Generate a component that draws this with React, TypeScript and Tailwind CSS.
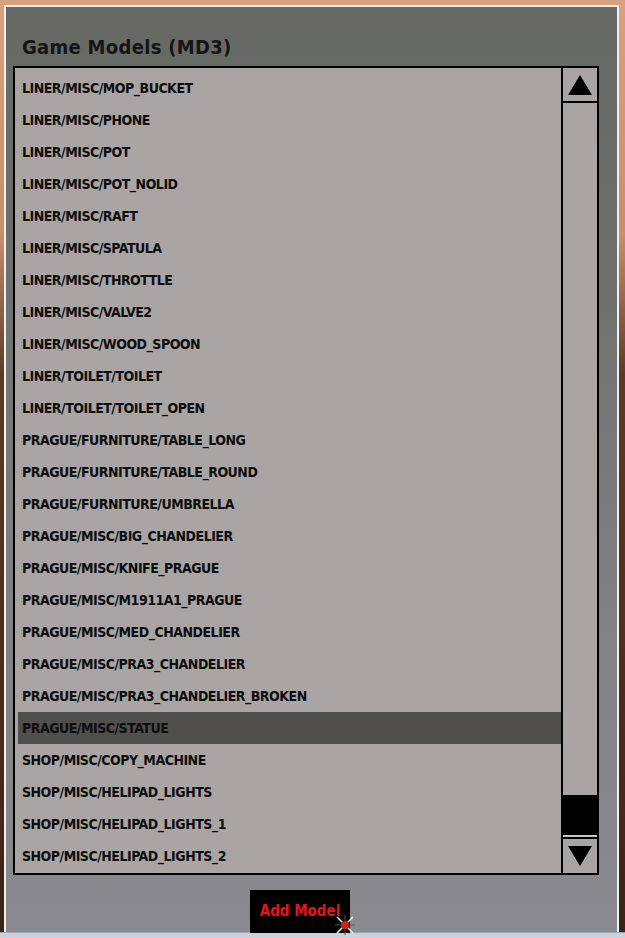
import React from "react";

const rows = [
  "LINER/MISC/MOP_BUCKET",
  "LINER/MISC/PHONE",
  "LINER/MISC/POT",
  "LINER/MISC/POT_NOLID",
  "LINER/MISC/RAFT",
  "LINER/MISC/SPATULA",
  "LINER/MISC/THROTTLE",
  "LINER/MISC/VALVE2",
  "LINER/MISC/WOOD_SPOON",
  "LINER/TOILET/TOILET",
  "LINER/TOILET/TOILET_OPEN",
  "PRAGUE/FURNITURE/TABLE_LONG",
  "PRAGUE/FURNITURE/TABLE_ROUND",
  "PRAGUE/FURNITURE/UMBRELLA",
  "PRAGUE/MISC/BIG_CHANDELIER",
  "PRAGUE/MISC/KNIFE_PRAGUE",
  "PRAGUE/MISC/M1911A1_PRAGUE",
  "PRAGUE/MISC/MED_CHANDELIER",
  "PRAGUE/MISC/PRA3_CHANDELIER",
  "PRAGUE/MISC/PRA3_CHANDELIER_BROKEN",
  "PRAGUE/MISC/STATUE",
  "SHOP/MISC/COPY_MACHINE",
  "SHOP/MISC/HELIPAD_LIGHTS",
  "SHOP/MISC/HELIPAD_LIGHTS_1",
  "SHOP/MISC/HELIPAD_LIGHTS_2",
];

export default function App() {
  return (
    <div
      className="w-[625px] h-[938px] flex flex-col overflow-hidden bg-[linear-gradient(180deg,#d9a27c_0%,#c98e6a_25%,#5a3a28_40%,#3a2418_100%)]"
      style={{ fontFamily: '"DejaVu Sans Condensed", "DejaVu Sans", sans-serif' }}
    >
      <div className="h-[5px] shrink-0 bg-[#d9a17b]" />
      <div className="flex flex-1 min-h-0">
        <div className="w-[4px] shrink-0" />
        <div className="w-[2px] shrink-0 bg-[#f2f0ec]" />
        <div className="flex-1 flex flex-col border-t-2 border-[#f2f0ec]">
          <div className="flex-1 flex flex-col pl-[7px] pr-[18px] pt-[25px] bg-[linear-gradient(180deg,#666864_0%,#6f706e_30%,#7f7e80_60%,#8b8a8e_100%)]">
            <div className="h-[34px] pl-[9px] text-[20px] font-bold leading-[30px] text-[#151515] tracking-[0.3px]">
              Game Models (MD3)
            </div>
            <div className="h-[809px] border-2 border-black bg-[#a8a5a4] flex">
              <div className="flex-1 pt-[4px] pl-[3px]">
                {rows.map((r) => (
                  <div
                    key={r}
                    className={
                      "h-[32px] flex items-center pl-[4px] pt-[1px] text-[14px] tracking-[-0.5px] font-bold text-[#0d0d0d] " +
                      (r === "PRAGUE/MISC/STATUE" ? "bg-[#514f4e]" : "")
                    }
                  >
                    {r}
                  </div>
                ))}
              </div>
              <div className="w-[36px] shrink-0 border-l-2 border-black flex flex-col">
                <div className="h-[35px] border-b-2 border-black flex items-center justify-center">
                  <svg width="26" height="22" viewBox="0 0 26 22">
                    <polygon points="13,1 25,21 1,21" fill="#000" />
                  </svg>
                </div>
                <div className="flex-1" />
                <div className="h-[40px] bg-black" />
                <div className="h-[2px] bg-[#c9c6c5]" />
                <div className="h-[36px] border-t-2 border-black flex items-center justify-center">
                  <svg width="26" height="22" viewBox="0 0 26 22">
                    <polygon points="1,1 25,1 13,21" fill="#000" />
                  </svg>
                </div>
              </div>
            </div>
            <div className="flex justify-center pt-[15px] pr-[12px]">
              <div className="relative w-[100px] h-[43px] bg-black flex items-center justify-center text-[15px] font-bold text-[#e8141c]">
                Add Model
                <svg className="absolute left-[84px] top-[24px]" width="22" height="22" viewBox="0 0 22 22">
                  <g stroke="#fff" strokeWidth="1.5">
                    <line x1="3" y1="3" x2="19" y2="19" />
                    <line x1="19" y1="3" x2="3" y2="19" />
                    <line x1="11" y1="1" x2="11" y2="21" stroke="#555" strokeWidth="1" />
                    <line x1="1" y1="11" x2="21" y2="11" stroke="#555" strokeWidth="1" />
                  </g>
                  <circle cx="11" cy="11" r="4" fill="#d2201a" />
                </svg>
              </div>
            </div>
          </div>
        </div>
        <div className="w-[2px] shrink-0 bg-[#f2f0ec]" />
        <div className="w-[6px] shrink-0" />
      </div>
      <div className="h-[6px] shrink-0 bg-[#c9d3de] border-t border-[#9aa7b6]" />
    </div>
  );
}
